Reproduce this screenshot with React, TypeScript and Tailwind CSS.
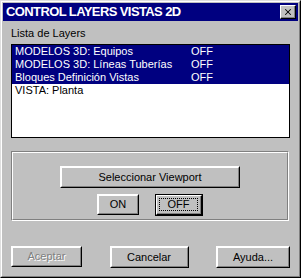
import { X } from 'lucide-react'

const capas = [
  { nombre: 'MODELOS 3D: Equipos', estado: 'OFF', sel: true },
  { nombre: 'MODELOS 3D: Líneas Tuberías', estado: 'OFF', sel: true },
  { nombre: 'Bloques Definición Vistas', estado: 'OFF', sel: true },
  { nombre: 'VISTA: Planta', estado: '', sel: false },
]

const fuente = { fontFamily: '"Liberation Sans", Arial, sans-serif' }

function Boton({ texto, className = '', deshabilitado = false, porDefecto = false }: { texto: string; className?: string; deshabilitado?: boolean; porDefecto?: boolean }) {
  return (
    <div className={`border ${porDefecto ? 'border-black' : 'border-t-white border-l-white border-r-black border-b-black'} ${className}`}>
      <div className={`flex h-full w-full border ${porDefecto ? 'border-t-white border-l-white border-r-black border-b-black' : 'border-t-white border-l-white border-r-[#808080] border-b-[#808080]'} bg-[#c0c0c0]`}>
        {porDefecto ? (
          <div className="flex flex-1 border-r border-b border-[#808080] p-[2px]">
            <div className="flex flex-1 items-center justify-center border border-dotted border-black text-black">{texto}</div>
          </div>
        ) : (
          <div className="flex flex-1 items-center justify-center">
            {deshabilitado ? (
              <span className="text-[#808080] [text-shadow:1px_1px_0_#fff]">{texto}</span>
            ) : (
              <span className="text-black">{texto}</span>
            )}
          </div>
        )}
      </div>
    </div>
  )
}

export default function App() {
  return (
    <div style={fuente} className="h-[278px] w-[301px] border border-t-[#dfdfdf] border-l-[#dfdfdf] border-r-black border-b-black bg-[#c0c0c0] text-[11px]">
      <div className="flex h-full flex-col border border-t-white border-l-white border-r-[#808080] border-b-[#808080] p-px">
        <div className="flex h-[18px] items-center justify-between bg-[#000080] pl-[3px] pr-[2px]">
          <span className="text-[13px] font-bold tracking-[-0.6px] text-white">CONTROL LAYERS VISTAS 2D</span>
          <div className="h-[14px] w-[16px] border border-t-white border-l-white border-r-black border-b-black bg-[#c0c0c0]">
            <div className="flex h-full w-full items-center justify-center border-r border-b border-[#808080]">
              <X size={10} strokeWidth={2.5} className="text-black" />
            </div>
          </div>
        </div>

        <div className="flex flex-1 flex-col px-[8px]">
          <p className="mt-[6px] leading-[13px] text-black">Lista de Layers</p>

          <div className="mt-[4px] h-[94px] w-[279px] border border-black bg-white">
            {capas.map(c => (
              <div key={c.nombre} className={`flex h-[13px] items-center leading-[13px] ${c.sel ? 'bg-[#000080] text-white' : 'text-black'}`}>
                <span className="w-[179px] pl-[3px]">{c.nombre}</span>
                <span>{c.estado}</span>
              </div>
            ))}
          </div>

          <div className="mt-[13px] h-[70px] w-[278px] border border-t-[#808080] border-l-[#808080] border-r-white border-b-white">
            <div className="flex h-full flex-col items-center border border-t-white border-l-white border-r-[#808080] border-b-[#808080]">
              <Boton texto="Seleccionar Viewport" className="mt-[13px] h-[22px] w-[180px]" />
              <div className="mt-[6px] flex gap-[16px]">
                <Boton texto="ON" className="h-[21px] w-[42px]" />
                <Boton texto="OFF" porDefecto className="h-[22px] w-[48px]" />
              </div>
            </div>
          </div>

          <div className="mt-[25px] flex justify-between">
            <Boton texto="Aceptar" deshabilitado className="h-[21px] w-[71px]" />
            <Boton texto="Cancelar" className="h-[22px] w-[79px]" />
            <Boton texto="Ayuda..." className="h-[22px] w-[74px]" />
          </div>
        </div>
      </div>
    </div>
  )
}
